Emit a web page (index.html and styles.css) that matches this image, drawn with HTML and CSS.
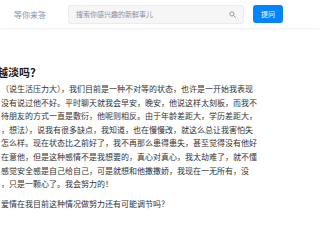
FILE: index.html
```html
<!DOCTYPE html>
<html lang="zh-CN">
<head>
  <meta charset="UTF-8" />
  <meta name="viewport" content="width=device-width, initial-scale=1.0"/>
  <title>问题详情</title>
  <link rel="stylesheet" href="styles.css">
</head>
<body>

  <header class="topbar">
    <div class="nav-item">等你来答</div>
    <div class="search">
      <span class="search-text">搜索你感兴趣的新鲜事儿</span>
      <svg class="search-icon" viewBox="0 0 10 10" width="7" height="7">
        <circle cx="4.2" cy="4.2" r="3" fill="none" stroke="#8590a6" stroke-width="1.3"/>
        <line x1="6.5" y1="6.5" x2="9" y2="9" stroke="#8590a6" stroke-width="1.3" stroke-linecap="round"/>
      </svg>
    </div>
    <div class="ask-btn">提问</div>
  </header>

  <main class="content">
    <h1 class="title">越淡吗？</h1>
    <p class="detail">
      （说生活压力大），我们目前是一种不对等的状态，也许是一开始我表现<br>
      没有说过他不好。平时聊天就我会早安，晚安，他说这样太刻板，而我不<br>
      待朋友的方式一直是敷衍，他呢则相反。由于年龄差距大，学历差距大，<br>
      ，想法），说我有很多缺点，我知道，也在慢慢改，就这么总让我害怕失<br>
      怎么样。现在状态比之前好了，我不再那么患得患失，甚至觉得没有他好<br>
      在意他，但是这种感情不是我想要的，真心对真心，我太劫难了，就不懂<br>
      感觉安全感是自己给自己，可是就想和他撒撒娇，我现在一无所有，没<br>
      ，只是一颗心了。我会努力的！
    </p>
    <p class="detail">爱情在我目前这种情况做努力还有可能调节吗？</p>
  </main>

</body>
</html>
```

FILE: styles.css
```css
body {
  margin: 0;
  padding: 0;
  background: #ffffff;
  font-family: "Noto Sans CJK SC", "Noto Sans", sans-serif;
  color: #1a1a1a;
  overflow: hidden;
}

.topbar {
  display: flex;
  align-items: center;
  height: 28px;
  background: #ffffff;
  box-shadow: 0 1px 2px rgba(26, 26, 26, 0.08);
}

.nav-item {
  margin-left: 14px;
  font-size: 8px;
  color: #8590a6;
}

.search {
  display: flex;
  align-items: center;
  justify-content: space-between;
  margin-left: 22px;
  width: 176px;
  height: 19px;
  box-sizing: border-box;
  padding: 0 7px;
  background: #f6f6f6;
  border: 1px solid #ebebeb;
  border-radius: 3px;
}

.search-text {
  font-size: 7px;
  color: #8590a6;
}

.ask-btn {
  margin-left: 9px;
  width: 30px;
  height: 18px;
  line-height: 18px;
  text-align: center;
  background: #0084ff;
  color: #ffffff;
  font-size: 7px;
  border-radius: 3px;
}

.content {
  padding-top: 36px;
  margin-left: 1px;
  white-space: nowrap;
}

.title {
  margin: 0 0 0 -4px;
  font-size: 11px;
  line-height: 16px;
  font-weight: bold;
}

.detail {
  margin: 2px 0 6px;
  font-size: 8px;
  line-height: 13.6px;
  color: #333333;
}
```
